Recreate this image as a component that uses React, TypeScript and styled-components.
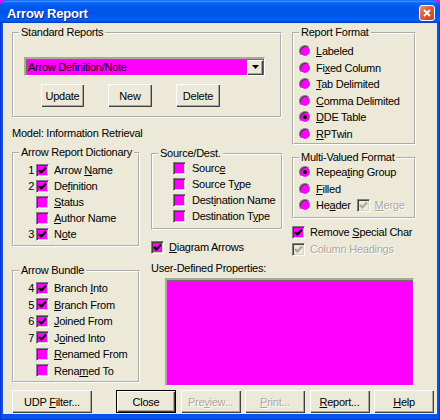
import React from "react";
import styled, { createGlobalStyle } from "styled-components";

const MAGENTA = "#ff00ff";
const FACE = "#ece9d8";

const GlobalStyle = createGlobalStyle`
  html, body { margin: 0; padding: 0; background: ${MAGENTA}; }
  body { font-family: "Liberation Sans", Arial, sans-serif; font-size: 11px; letter-spacing: -0.25px; color: #000; }
  #root { width: 440px; height: 420px; }
  u { text-underline-offset: 1px; }
`;

const Window = styled.div`
  box-sizing: border-box;
  width: 440px;
  height: 420px;
  display: flex;
  flex-direction: column;
  border-radius: 7px 7px 0 0;
  overflow: hidden;
  background: #0655e6;
  box-shadow: inset 1px 0 #0831d9, inset -1px 0 #0831d9, inset 0 -1px #0831d9;
`;

const TitleBar = styled.div`
  box-sizing: border-box;
  height: 23px;
  flex: none;
  display: flex;
  align-items: center;
  justify-content: space-between;
  padding: 3px 5px 0 7px;
  background: linear-gradient(
    180deg,
    #0a5ee8 0%,
    #3d95ff 5%,
    #0a68f8 12%,
    #0058ee 30%,
    #0054e6 60%,
    #0060fb 85%,
    #0050dc 95%,
    #0038b8 100%
  );
`;

const Title = styled.span`
  font-family: "Liberation Sans", Arial, sans-serif;
  font-weight: bold;
  font-size: 13px;
  color: #fff;
  text-shadow: 1px 1px #0f1f8a;
  letter-spacing: -0.2px;
`;

const CloseBox = styled.div`
  box-sizing: border-box;
  width: 16px;
  height: 16px;
  border: 1px solid #fff;
  border-radius: 3px;
  background: linear-gradient(135deg, #f0917a 0%, #e0603d 40%, #c9421d 100%);
  display: flex;
  align-items: center;
  justify-content: center;
`;

const Client = styled.div`
  box-sizing: border-box;
  flex: 1;
  margin: 0 3px 6px 3px;
  background: ${FACE};
  padding: 3px 0 0 9px;
  display: flex;
  flex-direction: column;
`;

const TopRow = styled.div<{ $mt?: number }>`
  display: flex;
  align-items: flex-start;
  margin-top: ${(p) => p.$mt ?? 0}px;
`;

const Column = styled.div<{ $w: number; $ml?: number }>`
  width: ${(p) => p.$w}px;
  margin-left: ${(p) => p.$ml ?? 0}px;
  display: flex;
  flex-direction: column;
  align-items: flex-start;
`;

const Group = styled.fieldset<{ $w: number; $h: number; $mt?: number }>`
  box-sizing: border-box;
  width: ${(p) => p.$w}px;
  height: ${(p) => p.$h}px;
  margin: ${(p) => p.$mt ?? 0}px 0 0 0;
  padding: 0;
  min-width: 0;
  border: 2px groove #ffffff;
  display: flex;
  flex-direction: column;
`;

const Legend = styled.legend`
  padding: 0 2px;
  margin-left: 5px;
  line-height: 13px;
  font-size: 11px;
  white-space: nowrap;
`;

const Combo = styled.div`
  box-sizing: border-box;
  width: 241px;
  height: 19px;
  margin: 18px 0 0 10px;
  display: flex;
  align-items: center;
  background: ${MAGENTA};
  border-style: solid;
  border-width: 2px 1px 1px 2px;
  border-color: #aca899 #fff #fff #aca899;
  box-shadow: inset 1px 1px #716f64;
  padding: 0 1px 0 1px;
`;

const ComboText = styled.span`
  flex: 1;
  padding-left: 1px;
  white-space: nowrap;
`;

const DropButton = styled.span`
  box-sizing: border-box;
  width: 16px;
  height: 15px;
  background: ${FACE};
  box-shadow: inset 1px 1px #fff, inset -1px -1px #404040, inset -2px -2px #aca899;
  display: flex;
  align-items: center;
  justify-content: center;
`;

const ButtonRow = styled.div<{ $mt?: number; $pl?: number; $gap?: number }>`
  display: flex;
  align-items: center;
  margin-top: ${(p) => p.$mt ?? 0}px;
  padding-left: ${(p) => p.$pl ?? 0}px;
  gap: ${(p) => p.$gap ?? 0}px;
`;

const Button = styled.button<{ $w: number; $default?: boolean; $ml?: number }>`
  box-sizing: border-box;
  width: ${(p) => p.$w}px;
  height: 23px;
  margin: 0 0 0 ${(p) => p.$ml ?? 0}px;
  padding: 0;
  font-family: "Liberation Sans", Arial, sans-serif;
  font-size: 11px;
  letter-spacing: -0.25px;
  color: #000;
  background: ${FACE};
  border: ${(p) => (p.$default ? "1px solid #000" : "none")};
  box-shadow: inset 1px 1px #fff, inset -1px -1px #404040, inset -2px -2px #aca899;
  &:disabled {
    color: #aca899;
    text-shadow: 1px 1px #fff;
  }
`;

const PlainText = styled.div<{ $mt?: number }>`
  margin-top: ${(p) => p.$mt ?? 0}px;
  line-height: 13px;
  white-space: nowrap;
`;

const RowList = styled.div<{ $pt?: number; $pl?: number }>`
  display: flex;
  flex-direction: column;
  padding: ${(p) => p.$pt ?? 0}px 0 0 ${(p) => p.$pl ?? 0}px;
`;

const Row = styled.div<{ $h?: number; $mt?: number }>`
  display: flex;
  align-items: center;
  height: ${(p) => p.$h ?? 16}px;
  margin-top: ${(p) => p.$mt ?? 0}px;
  white-space: nowrap;
`;

const Num = styled.span`
  width: 20px;
  margin-right: 2px;
  text-align: right;
`;

const Label = styled.span<{ $disabled?: boolean; $ml?: number }>`
  margin-left: ${(p) => p.$ml ?? 5}px;
  color: ${(p) => (p.$disabled ? "#aca899" : "#000")};
  text-shadow: ${(p) => (p.$disabled ? "1px 1px #fff" : "none")};
`;

const Box = styled.span<{ $disabled?: boolean; $ml?: number }>`
  box-sizing: border-box;
  flex: none;
  width: 13px;
  height: 13px;
  margin-left: ${(p) => p.$ml ?? 0}px;
  display: flex;
  align-items: center;
  justify-content: center;
  background: ${(p) => (p.$disabled ? FACE : MAGENTA)};
  border: 1px solid;
  border-color: #808080 #fff #fff #808080;
  box-shadow: inset 1px 1px #404040, inset -1px -1px #d4d0c8;
`;

const RadioDot = styled.span<{ $on?: boolean }>`
  box-sizing: border-box;
  flex: none;
  width: 12px;
  height: 12px;
  border-radius: 50%;
  background: ${MAGENTA};
  border: 1px solid;
  border-color: #808080 #fff #fff #808080;
  box-shadow: inset 1px 1px #404040;
  display: flex;
  align-items: center;
  justify-content: center;
  &::after {
    content: "";
    display: ${(p) => (p.$on ? "block" : "none")};
    width: 4px;
    height: 4px;
    border-radius: 50%;
    background: #000;
  }
`;

const PropsBox = styled.div`
  box-sizing: border-box;
  width: 249px;
  height: 108px;
  margin: 3px 0 0 14px;
  background: ${MAGENTA};
  border-style: solid;
  border-width: 2px 1px 1px 2px;
  border-color: #aca899 #fff #fff #aca899;
  box-shadow: inset 1px 1px #716f64;
`;

const BottomRow = styled.div`
  display: flex;
  align-items: flex-start;
  margin-top: 5px;
`;

const Check = ({ color = "#000" }: { color?: string }) => (
  <svg width="9" height="9" viewBox="0 0 9 9">
    <path d="M1 4 L3.3 6.4 L8 1.6" fill="none" stroke={color} strokeWidth="2.2" />
  </svg>
);

type CheckProps = {
  checked?: boolean;
  disabled?: boolean;
  ml?: number;
};

const CheckBox = ({ checked, disabled, ml }: CheckProps) => (
  <Box $disabled={disabled} $ml={ml}>
    {checked && <Check color={disabled ? "#aca899" : "#000"} />}
  </Box>
);

type Item = { num?: string; label: React.ReactNode; checked?: boolean };

const dictionary: Item[] = [
  { num: "1", label: <>Arrow <u>N</u>ame</>, checked: true },
  { num: "2", label: <>De<u>f</u>inition</>, checked: true },
  { label: <><u>S</u>tatus</> },
  { label: <><u>A</u>uthor Name</> },
  { num: "3", label: <>N<u>o</u>te</>, checked: true },
];

const bundle: Item[] = [
  { num: "4", label: <>Branch <u>I</u>nto</>, checked: true },
  { num: "5", label: <><u>B</u>ranch From</>, checked: true },
  { num: "6", label: <><u>J</u>oined From</>, checked: true },
  { num: "7", label: <>J<u>o</u>ined Into</>, checked: true },
  { label: <><u>R</u>enamed From</> },
  { label: <>Rena<u>m</u>ed To</> },
];

const sourceDest: Item[] = [
  { label: <>Sourc<u>e</u></> },
  { label: <>Source T<u>y</u>pe</> },
  { label: <>Dest<u>i</u>nation Name</> },
  { label: <>Destination T<u>y</u>pe</> },
];

const formats: { label: React.ReactNode; on?: boolean }[] = [
  { label: <><u>L</u>abeled</> },
  { label: <>Fi<u>x</u>ed Column</> },
  { label: <><u>T</u>ab Delimited</> },
  { label: <><u>C</u>omma Delimited</> },
  { label: <><u>D</u>DE Table</>, on: true },
  { label: <><u>R</u>PTwin</> },
];

const NumberedList = ({ items, rowH }: { items: Item[]; rowH: number }) => (
  <RowList $pt={3}>
    {items.map((it, i) => (
      <Row key={i} $h={rowH}>
        <Num>{it.num ?? ""}</Num>
        <CheckBox checked={it.checked} />
        <Label>{it.label}</Label>
      </Row>
    ))}
  </RowList>
);

export default function App() {
  return (
    <>
      <GlobalStyle />
      <Window>
        <TitleBar>
          <Title>Arrow Report</Title>
          <CloseBox>
            <svg width="8" height="8" viewBox="0 0 8 8">
              <path d="M1 1 L7 7 M7 1 L1 7" stroke="#fff" strokeWidth="1.8" />
            </svg>
          </CloseBox>
        </TitleBar>
        <Client>
          <TopRow>
            <Column $w={272}>
              <Group $w={270} $h={92}>
                <Legend>Standard Reports</Legend>
                <Combo>
                  <ComboText>Arrow Definition/Note</ComboText>
                  <DropButton>
                    <svg width="7" height="4" viewBox="0 0 7 4">
                      <path d="M0 0 H7 L3.5 4 Z" fill="#000" />
                    </svg>
                  </DropButton>
                </Combo>
                <ButtonRow $mt={8} $pl={27} $gap={24}>
                  <Button $w={43}>Update</Button>
                  <Button $w={44}>New</Button>
                  <Button $w={44}>Delete</Button>
                </ButtonRow>
              </Group>
              <PlainText $mt={9}>Model: Information Retrieval</PlainText>
              <TopRow $mt={6}>
                <Group $w={128} $h={101}>
                  <Legend>Arrow Report Dictionary</Legend>
                  <NumberedList items={dictionary} rowH={16} />
                </Group>
                <Column $w={132} $ml={11}>
                  <Group $w={132} $h={83} $mt={1}>
                    <Legend>Source/Dest.</Legend>
                    <RowList $pl={20}>
                      {sourceDest.map((it, i) => (
                        <Row key={i} $h={16}>
                          <CheckBox />
                          <Label $ml={6}>{it.label}</Label>
                        </Row>
                      ))}
                    </RowList>
                  </Group>
                  <Row $mt={9}>
                    <CheckBox checked />
                    <Label>
                      <u>D</u>iagram Arrows
                    </Label>
                  </Row>
                </Column>
              </TopRow>
            </Column>
            <Column $w={124} $ml={8}>
              <Group $w={124} $h={119}>
                <Legend>Report Format</Legend>
                <RowList $pt={4} $pl={5}>
                  {formats.map((f, i) => (
                    <Row key={i} $h={16.5}>
                      <RadioDot $on={f.on} />
                      <Label>{f.label}</Label>
                    </Row>
                  ))}
                </RowList>
              </Group>
              <Group $w={124} $h={68} $mt={6}>
                <Legend>Multi-Valued Format</Legend>
                <RowList $pl={5}>
                  <Row $h={16.5}>
                    <RadioDot $on />
                    <Label>
                      Repea<u>t</u>ing Group
                    </Label>
                  </Row>
                  <Row $h={16.5}>
                    <RadioDot />
                    <Label>
                      <u>F</u>illed
                    </Label>
                  </Row>
                  <Row $h={16.5}>
                    <RadioDot />
                    <Label>
                      He<u>a</u>der
                    </Label>
                    <CheckBox checked disabled ml={6} />
                    <Label $disabled>
                      <u>M</u>erge
                    </Label>
                  </Row>
                </RowList>
              </Group>
              <Row $mt={5}>
                <CheckBox checked />
                <Label>
                  Remove <u>S</u>pecial Char
                </Label>
              </Row>
              <Row $mt={1}>
                <CheckBox checked disabled />
                <Label $disabled>Column Headings</Label>
              </Row>
            </Column>
          </TopRow>
          <BottomRow>
            <Group $w={128} $h={119} $mt={2}>
              <Legend>Arrow Bundle</Legend>
              <NumberedList items={bundle} rowH={16.5} />
            </Group>
            <Column $w={263} $ml={11}>
              <PlainText>User-Defined Properties:</PlainText>
              <PropsBox />
            </Column>
          </BottomRow>
          <ButtonRow $mt={4} $gap={4.5}>
            <Button $w={80}>
              UDP <u>F</u>ilter...
            </Button>
            <Button $w={60} $default $ml={19.5}>
              Close
            </Button>
            <Button $w={60} disabled>
              Pre<u>v</u>iew...
            </Button>
            <Button $w={60} disabled>
              <u>P</u>rint...
            </Button>
            <Button $w={60}>
              <u>R</u>eport...
            </Button>
            <Button $w={60}>
              <u>H</u>elp
            </Button>
          </ButtonRow>
        </Client>
      </Window>
    </>
  );
}
